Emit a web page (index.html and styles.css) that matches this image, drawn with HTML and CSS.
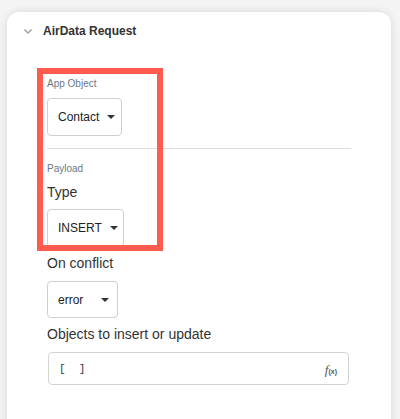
FILE: index.html
```html
<!DOCTYPE html>
<html>
<head>
<meta charset="utf-8">
<link rel="stylesheet" href="styles.css">
</head>
<body>
<div class="card">
  <div class="header">
    <svg class="chev" width="8" height="5" viewBox="0 0 8 5"><path d="M0.5 0.5 L4 4 L7.5 0.5" fill="none" stroke="#a8a8a8" stroke-width="1.6"/></svg>
    <span class="title">AirData Request</span>
  </div>
  <div class="small-label first">App Object</div>
  <div class="select s1"><span>Contact</span><span class="caret"></span></div>
  <div class="divider"></div>
  <div class="small-label payload">Payload</div>
  <div class="label type">Type</div>
  <div class="select s2"><span>INSERT</span><span class="caret"></span></div>
  <div class="label conflict">On conflict</div>
  <div class="select s3"><span>error</span><span class="caret"></span></div>
  <div class="label objects">Objects to insert or update</div>
  <div class="input">
    <span class="code"><span class="br">[</span>  <span class="br">]</span></span>
    <span class="fx"><i>f</i><small>(x)</small></span>
  </div>
  <div class="highlight"></div>
</div>
</body>
</html>
```
FILE: styles.css
```css
html, body { margin: 0; padding: 0; }
body {
  background: #f4f4f4;
  font-family: "Liberation Sans", Arial, sans-serif;
  color: #333;
  width: 400px;
  height: 419px;
  overflow: hidden;
}
.card {
  position: relative;
  margin: 12px 9px 0 7px;
  background: #fff;
  border-radius: 12px 12px 0 0;
  box-shadow: 0 0 8px rgba(0,0,0,0.12);
  height: 420px;
  padding: 0 40px;
  box-sizing: border-box;
}
.header {
  height: 38px;
  display: flex;
  align-items: center;
  margin-left: -23px;
  gap: 11px;
}
.chev { display: block; }
.title { font-size: 12px; font-weight: bold; color: #333; }
.small-label {
  font-size: 10px;
  line-height: 12px;
  color: #6b7685;
}
.first { margin-top: 28px; }
.select {
  display: flex;
  align-items: center;
  justify-content: space-between;
  gap: 8px;
  height: 38px;
  box-sizing: border-box;
  padding: 0 8px 0 10px;
  border: 1px solid #cfcfcf;
  border-radius: 4px;
  font-size: 12px;
  color: #222;
}
.caret {
  width: 0; height: 0;
  border-left: 4px solid transparent;
  border-right: 4px solid transparent;
  border-top: 4px solid #333;
}
.s1 { margin-top: 8px; width: 75px; }
.s2 { margin-top: 8px; width: 77px; }
.s3 { margin-top: 9px; width: 71px; height: 37px; }
.divider { margin-top: 12px; height: 1px; background: #dedede; }
.payload { margin-top: 14px; }
.label { font-size: 14px; line-height: 17px; color: #333; }
.type { margin-top: 9px; }
.conflict { margin-top: 8px; }
.objects { margin-top: 8px; }
.input {
  margin: 9px 2px 0 1px;
  height: 33px;
  box-sizing: border-box;
  border: 1px solid #d4d4d4;
  border-radius: 4px;
  display: flex;
  align-items: center;
  justify-content: space-between;
  padding: 0 11px 0 10px;
}
.code {
  font-family: "Liberation Mono", monospace;
  font-size: 11px;
  white-space: pre;
  color: #333;
}
.fx { color: #555; font-family: "Liberation Serif", serif; }
.fx i { font-size: 13px; }
.fx small { font-size: 7px; font-family: "Liberation Sans", sans-serif; font-weight: bold; }
.highlight {
  position: absolute;
  left: 30px;
  top: 56px;
  width: 126px;
  height: 183px;
  box-sizing: border-box;
  border: 6px solid #ff5b4e;
}
```
